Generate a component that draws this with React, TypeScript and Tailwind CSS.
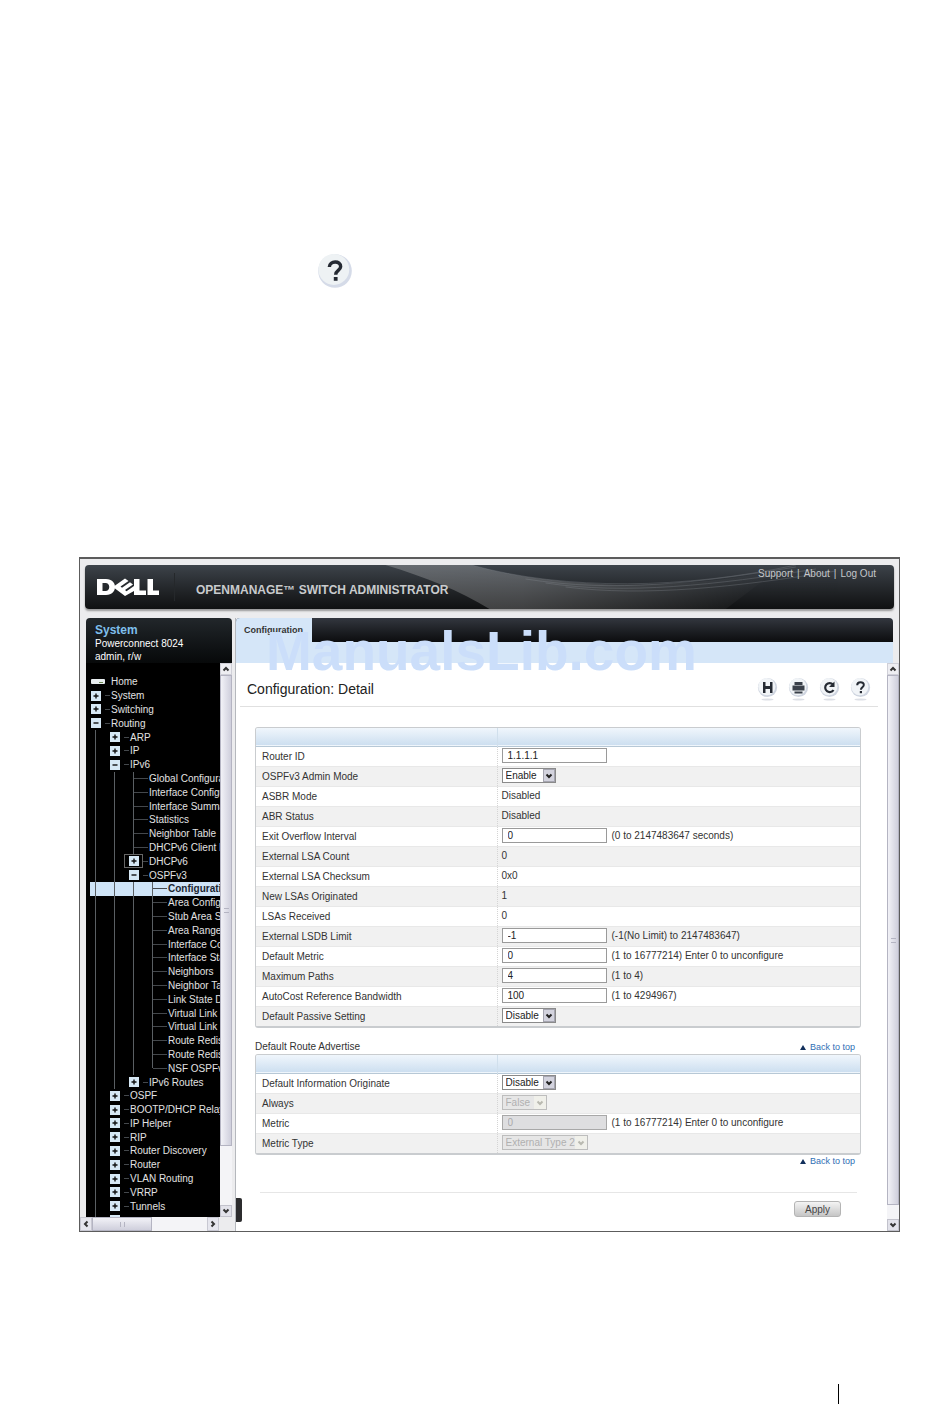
import type { ReactNode } from 'react';
import clsx from 'clsx';

type TreeNode = {
  label: string;
  depth: number;
  toggle?: 'plus' | 'minus';
  selected?: boolean;
  focused?: boolean;
  last?: boolean;
};

const TREE: TreeNode[] = [
  { label: 'System', depth: 0, toggle: 'plus' },
  { label: 'Switching', depth: 0, toggle: 'plus' },
  { label: 'Routing', depth: 0, toggle: 'minus' },
  { label: 'ARP', depth: 1, toggle: 'plus' },
  { label: 'IP', depth: 1, toggle: 'plus' },
  { label: 'IPv6', depth: 1, toggle: 'minus' },
  { label: 'Global Configuration', depth: 2 },
  { label: 'Interface Configuration', depth: 2 },
  { label: 'Interface Summary', depth: 2 },
  { label: 'Statistics', depth: 2 },
  { label: 'Neighbor Table', depth: 2 },
  { label: 'DHCPv6 Client Parameters', depth: 2 },
  { label: 'DHCPv6', depth: 2, toggle: 'plus', focused: true },
  { label: 'OSPFv3', depth: 2, toggle: 'minus' },
  { label: 'Configuration', depth: 3, selected: true },
  { label: 'Area Configuration', depth: 3 },
  { label: 'Stub Area Summary', depth: 3 },
  { label: 'Area Range Configuration', depth: 3 },
  { label: 'Interface Configuration', depth: 3 },
  { label: 'Interface Statistics', depth: 3 },
  { label: 'Neighbors', depth: 3 },
  { label: 'Neighbor Table', depth: 3 },
  { label: 'Link State Database', depth: 3 },
  { label: 'Virtual Link Configuration', depth: 3 },
  { label: 'Virtual Link Summary', depth: 3 },
  { label: 'Route Redistribution', depth: 3 },
  { label: 'Route Redistribution', depth: 3 },
  { label: 'NSF OSPFv3', depth: 3, last: true },
  { label: 'IPv6 Routes', depth: 2, toggle: 'plus' },
  { label: 'OSPF', depth: 1, toggle: 'plus' },
  { label: 'BOOTP/DHCP Relay', depth: 1, toggle: 'plus' },
  { label: 'IP Helper', depth: 1, toggle: 'plus' },
  { label: 'RIP', depth: 1, toggle: 'plus' },
  { label: 'Router Discovery', depth: 1, toggle: 'plus' },
  { label: 'Router', depth: 1, toggle: 'plus' },
  { label: 'VLAN Routing', depth: 1, toggle: 'plus' },
  { label: 'VRRP', depth: 1, toggle: 'plus' },
  { label: 'Tunnels', depth: 1, toggle: 'plus' },
  { label: '', depth: 1, toggle: 'plus' },
];

type Field = {
  label: string;
  value: string;
  kind: 'input' | 'select' | 'text';
  hint?: string;
  disabled?: boolean;
};

const DETAIL: Field[] = [
  { label: 'Router ID', value: '1.1.1.1', kind: 'input' },
  { label: 'OSPFv3 Admin Mode', value: 'Enable', kind: 'select' },
  { label: 'ASBR Mode', value: 'Disabled', kind: 'text' },
  { label: 'ABR Status', value: 'Disabled', kind: 'text' },
  { label: 'Exit Overflow Interval', value: '0', kind: 'input', hint: '(0 to 2147483647 seconds)' },
  { label: 'External LSA Count', value: '0', kind: 'text' },
  { label: 'External LSA Checksum', value: '0x0', kind: 'text' },
  { label: 'New LSAs Originated', value: '1', kind: 'text' },
  { label: 'LSAs Received', value: '0', kind: 'text' },
  { label: 'External LSDB Limit', value: '-1', kind: 'input', hint: '(-1(No Limit) to 2147483647)' },
  { label: 'Default Metric', value: '0', kind: 'input', hint: '(1 to 16777214) Enter 0 to unconfigure' },
  { label: 'Maximum Paths', value: '4', kind: 'input', hint: '(1 to 4)' },
  { label: 'AutoCost Reference Bandwidth', value: '100', kind: 'input', hint: '(1 to 4294967)' },
  { label: 'Default Passive Setting', value: 'Disable', kind: 'select' },
];

const ADVERTISE: Field[] = [
  { label: 'Default Information Originate', value: 'Disable', kind: 'select' },
  { label: 'Always', value: 'False', kind: 'select', disabled: true },
  { label: 'Metric', value: '0', kind: 'input', hint: '(1 to 16777214) Enter 0 to unconfigure', disabled: true },
  { label: 'Metric Type', value: 'External Type 2', kind: 'select', disabled: true },
];

const SELECT_WIDTH: Record<string, string> = {
  Enable: 'w-[54px]',
  Disable: 'w-[54px]',
  False: 'w-[45px]',
  'External Type 2': 'w-[86px]',
};

function Chevron({ turn = '' }: { turn?: string }) {
  return (
    <svg viewBox="0 0 8 8" className={clsx('h-2 w-2', turn)} fill="none" stroke="currentColor" strokeWidth="2">
      <path d="M1.5 2.5 4 5 6.5 2.5" />
    </svg>
  );
}

function Guide() {
  return (
    <span className="flex w-[19px] shrink-0 justify-center self-stretch">
      <span className="w-px bg-[#5a5f63]" />
    </span>
  );
}

function TreeRow({ node }: { node: TreeNode }) {
  const guides = Array.from({ length: node.depth }, (_, i) => <Guide key={i} />);
  return (
    <li
      className={clsx(
        'flex min-h-0 flex-1 items-center',
        node.selected && 'bg-linear-to-r from-black from-[4px] to-[#cfe4f7] to-[4px]',
      )}
    >
      {guides}
      {node.toggle ? (
        <span
          className={clsx(
            'flex w-[19px] shrink-0 items-center justify-center self-stretch',
            node.focused && 'outline outline-1 -outline-offset-1 outline-[#666]',
          )}
        >
          <button
            type="button"
            aria-label={`Toggle ${node.label}`}
            className="flex h-[10px] w-[10px] items-center justify-center bg-[#d6e8f5] text-[#111]"
          >
            <svg viewBox="0 0 10 10" className="h-[10px] w-[10px]" stroke="currentColor" strokeWidth="1.4">
              <path d={node.toggle === 'plus' ? 'M2.5 5h5M5 2.5v5' : 'M2.5 5h5'} />
            </svg>
          </button>
        </span>
      ) : (
        <span className="flex w-[19px] shrink-0 self-stretch pl-[9px]">
          <span className={clsx('w-px bg-[#5a5f63]', node.last ? 'h-1/2' : 'h-full')} />
          <span className="h-px flex-1 self-center bg-[#44484c]" />
        </span>
      )}
      <span className="mr-px h-px w-[5px] shrink-0 bg-[#44484c]" />
      <a
        href="#"
        className={clsx(
          'whitespace-nowrap text-[10px] leading-[13px]',
          node.selected ? 'font-bold text-[#1a2430]' : 'text-[#e2e2e2]',
        )}
      >
        {node.label}
      </a>
    </li>
  );
}

function FieldControl({ field, id }: { field: Field; id: string }) {
  if (field.kind === 'text') return <output id={id}>{field.value}</output>;
  if (field.kind === 'select') {
    return (
      <span className="relative inline-flex">
        <select
          id={id}
          disabled={field.disabled}
          defaultValue={field.value}
          className={clsx(
            'h-[15px] appearance-none border pl-[3px] leading-[13px] opacity-100',
            SELECT_WIDTH[field.value],
            field.disabled ? 'border-[#bdbdbd] bg-[#e6e6e6] text-[#b0b0b0]' : 'border-[#8a8a8a] bg-white text-[#222]',
          )}
        >
          <option>{field.value}</option>
        </select>
        <span
          className={clsx(
            'pointer-events-none absolute inset-y-px right-px flex w-3 items-center justify-center',
            field.disabled ? 'bg-[#f0f0ea] text-[#b9b9b0]' : 'border border-[#a5a5b0] bg-[#d3d3de] text-[#222]',
          )}
        >
          <Chevron />
        </span>
      </span>
    );
  }
  return (
    <span className="flex items-center gap-[5px]">
      <input
        id={id}
        defaultValue={field.value}
        disabled={field.disabled}
        className={clsx(
          'h-[15px] w-[105px] border px-[5px]',
          field.disabled ? 'border-[#a8a8a8] bg-[#dedee0] text-[#aaa]' : 'border-[#9a9a9a] bg-white text-[#222]',
        )}
      />
      {field.hint}
    </span>
  );
}

function FieldTable({ name, fields }: { name: string; fields: Field[] }) {
  return (
    <div className="overflow-hidden rounded-[3px] border border-b-2 border-[#c9cccf]">
      <table aria-label={name} className="w-full table-fixed border-collapse text-[10px] leading-[13px] text-[#333]">
        <thead>
          <tr className="h-[18px] border-b border-[#b7c8d6] bg-gradient-to-b from-[#f0f6fc] to-[#cddff0]">
            <th className="w-[241px]" />
            <th className="border-l border-[#d0dfec]" />
          </tr>
        </thead>
        <tbody>
          {fields.map((field) => {
            const id = `${name}-${field.label}`.replace(/\s+/g, '-');
            return (
              <tr key={field.label} className="h-5 border-b border-[#e8e8e8] even:bg-[#f1f1f1] last:border-b-0">
                <td className="py-0 pl-[6px]">
                  <label htmlFor={id}>{field.label}</label>
                </td>
                <td className="border-l border-dotted border-[#d4d4d4] py-0 pl-1">
                  <div className="flex h-[19px] items-center pb-px">
                    <FieldControl field={field} id={id} />
                  </div>
                </td>
              </tr>
            );
          })}
        </tbody>
      </table>
    </div>
  );
}

function BackToTop() {
  return (
    <a href="#top" className="flex items-center gap-1 text-[9px] leading-[13px] text-[#2f6fb5]">
      <svg viewBox="0 0 6 5" className="h-[5px] w-[6px]" fill="#12305c">
        <path d="M3 0 6 5H0z" />
      </svg>
      Back to top
    </a>
  );
}

function RoundButton({ label, children }: { label: string; children: ReactNode }) {
  return (
    <button type="button" aria-label={label} className="h-6 w-[21px]">
      <svg viewBox="0 0 21 24" className="h-6 w-[21px]">
        <ellipse cx="10.5" cy="22.5" rx="6" ry="1" fill="#dde0e6" />
        <circle cx="10.5" cy="10.5" r="9.6" fill="#cfd5e0" />
        <circle cx="9.8" cy="9.6" r="8.6" fill="#f1f4f7" />
        {children}
      </svg>
    </button>
  );
}

function QuestionMark() {
  return (
    <>
      <path d="M7.2 8.2C7.2 4.3 14 4.2 13.8 8c-.1 2.2-2.9 2.2-2.9 4.7" fill="none" stroke="#252a33" strokeWidth="2" />
      <rect x="9.8" y="14" width="2.2" height="2.2" fill="#252a33" />
    </>
  );
}

function VScroll({ thumb }: { thumb: string }) {
  return (
    <div className="flex w-3 shrink-0 flex-col bg-[#f4f4f7]">
      <button
        type="button"
        aria-label="Scroll up"
        className="flex h-3 items-center justify-center border border-[#d0d0d8] bg-[#eeeef2] text-[#333]"
      >
        <Chevron turn="rotate-180" />
      </button>
      <div className={clsx('flex items-center justify-center border border-[#b4b4c2] bg-gradient-to-r from-[#f2f2f7] to-[#cfcfdc]', thumb)}>
        <span className="h-[5px] w-[5px] border-y border-[#b4b4c2]" />
      </div>
      <span className="flex-1" />
      <button
        type="button"
        aria-label="Scroll down"
        className="flex h-3 items-center justify-center border border-[#c2c2cc] bg-[#e2e2ea] text-[#333]"
      >
        <Chevron />
      </button>
    </div>
  );
}

function Banner() {
  return (
    <header className="relative mx-[5px] mt-[6px] flex h-[44px] items-center overflow-hidden rounded-[4px] bg-gradient-to-b from-[#3d434a] to-[#101112] shadow-[0_2px_2px_#999]">
      <svg viewBox="0 0 808 44" preserveAspectRatio="none" className="absolute inset-0 h-full w-full">
        <defs>
          <linearGradient id="sweep" x1="0" y1="0" x2="1" y2="0">
            <stop offset="0" stopColor="#fff" stopOpacity="0.22" />
            <stop offset="0.35" stopColor="#fff" stopOpacity="0.2" />
            <stop offset="1" stopColor="#fff" stopOpacity="0" />
          </linearGradient>
        </defs>
        <path d="M300 0C340 12 375 26 404 44H640L690 6C600 24 480 26 386 0Z" fill="url(#sweep)" />
        <g fill="none" stroke="#8b9197" strokeWidth="0.6" opacity="0.5">
          <path d="M386 0C480 26 600 24 710 0" />
          <path d="M440 14C530 28 610 18 710 2" />
          <path d="M460 18C540 30 630 20 730 4" />
          <path d="M480 22C560 32 650 22 750 6" />
        </g>
      </svg>
      <svg viewBox="0 0 64 18" role="img" aria-label="Dell" className="relative ml-[11px] h-[18px] w-16">
        <path
          d="M1 1H10C22 1 22 17 10 17H1ZM6.500 5V13H9.500C14.500 13 14.500 5 9.500 5Z"
          fill="#fff"
          fillRule="evenodd"
        />
        <path d="M17 9 29 0.500 32.500 3 24.500 8.500 26 9.800 34 4.300 37 6.500 29 12 30.500 13.200 38 8V13L29 18Z" fill="#fff" />
        <path d="M38 1H43.500V12.500H50V17H38ZM51.500 1H57V12.500H63V17H51.500Z" fill="#fff" />
      </svg>
      <span className="relative ml-[14px] h-7 w-px bg-[#25282b]" />
      <h1 className="relative ml-[21px] whitespace-nowrap pt-[6px] text-[12px] leading-[14px] font-bold text-[#c9cbcd]">
        OPENMANAGE™ SWITCH ADMINISTRATOR
      </h1>
      <nav className="relative mr-[18px] ml-auto flex gap-1 self-start pt-[2px] text-[10px] leading-[13px] text-[#c4c7ca]">
        <a href="#support">Support</a>
        <span>|</span>
        <a href="#about">About</a>
        <span>|</span>
        <a href="#logout">Log Out</a>
      </nav>
    </header>
  );
}

function Sidebar() {
  return (
    <aside className="flex w-[155px] shrink-0 flex-col">
      <div className="mr-[3px] ml-[6px] h-[45px] rounded-t-[4px] bg-gradient-to-b from-[#22272b] to-[#07090a] pt-[6px] pl-[9px] text-[10px] leading-[13px] text-white">
        <h2 className="text-[12px] font-bold text-[#7fbfec]">System</h2>
        <p>Powerconnect 8024</p>
        <p>admin, r/w</p>
      </div>
      <div className="mr-[3px] ml-[6px] flex h-[554px]">
        <nav aria-label="Navigation" className="flex-1 overflow-hidden bg-black pt-3">
          <ul className="flex h-[552px] w-[300px] flex-col">
            <li className="flex min-h-0 flex-1 items-center">
              <svg viewBox="0 0 14 5" className="ml-[5px] h-[5px] w-[14px]">
                <rect width="14" height="5" rx="1" fill="#e8eef0" />
                <path d="M8 3.5h4" stroke="#6c8a52" />
              </svg>
              <a href="#home" className="ml-[6px] text-[10px] leading-[13px] text-[#e2e2e2]">
                Home
              </a>
            </li>
            {TREE.map((node, i) => (
              <TreeRow key={i} node={node} />
            ))}
          </ul>
        </nav>
        <VScroll thumb="h-[471px]" />
      </div>
      <div className="mr-[16px] flex h-[14px] bg-[#f4f4f7] text-[#333]">
        <button type="button" aria-label="Scroll left" className="flex w-3 items-center justify-center border border-[#c8c8d2] bg-[#e6e6ee]">
          <Chevron turn="rotate-90" />
        </button>
        <div className="flex w-[60px] items-center justify-center border border-[#b4b4c2] bg-gradient-to-b from-[#f2f2f7] to-[#cfcfdc]">
          <span className="h-[5px] w-[5px] border-x border-[#b4b4c2]" />
        </div>
        <span className="flex-1" />
        <button type="button" aria-label="Scroll right" className="flex w-3 items-center justify-center border border-[#c8c8d2] bg-[#e6e6ee]">
          <Chevron turn="-rotate-90" />
        </button>
      </div>
    </aside>
  );
}

function Detail() {
  return (
    <main className="relative flex-1 bg-white pb-[14px]">
      <div className="mr-[9px] ml-1 flex h-[44px] items-center justify-between border-b border-[#e0e0e0] px-[7px] pt-2">
        <h2 className="text-[14px] leading-[18px] text-[#222]">Configuration: Detail</h2>
        <div className="flex gap-[10px]">
          <RoundButton label="Save">
            <path d="M6 5h9.5v11H6z" fill="#252a33" />
            <path d="M8.500 4.500h4.500V9H8.500zM8.500 12h4.500v5H8.500z" fill="#f1f4f7" />
          </RoundButton>
          <RoundButton label="Print">
            <path d="M6.500 5h8v3h-8zM4.500 8.500h12v5h-12zM6.500 14.500h8v2h-8z" fill="#3a404a" />
          </RoundButton>
          <RoundButton label="Refresh">
            <path d="M14 7.500A4.500 4.500 0 1 0 14.500 13" fill="none" stroke="#252a33" strokeWidth="2.2" />
            <path d="M15.500 4.500v5.500h-5.500z" fill="#252a33" />
          </RoundButton>
          <RoundButton label="Help">
            <QuestionMark />
          </RoundButton>
        </div>
      </div>
      <div className="mt-5 mr-[26px] ml-[19px]">
        <FieldTable name="detail" fields={DETAIL} />
        <div className="mt-[12px] flex items-center justify-between pr-[6px]">
          <h3 className="text-[10px] leading-[14px] text-[#333]">Default Route Advertise</h3>
          <BackToTop />
        </div>
        <FieldTable name="advertise" fields={ADVERTISE} />
        <div className="flex justify-end pr-[6px]">
          <BackToTop />
        </div>
        <div className="mt-[24px] mr-1 ml-[5px] flex justify-end border-t border-[#e6e6e6] pt-2 pr-4">
          <button
            type="submit"
            className="h-4 w-[47px] rounded-[3px] border border-[#b4b4b4] bg-gradient-to-b from-[#f4f4f4] to-[#c6c6c6] text-[10px] leading-[13px] text-[#444]"
          >
            Apply
          </button>
        </div>
      </div>
      <span className="absolute bottom-[9px] left-0 h-6 w-[6px] rounded-r-[2px] bg-[#2c2c2e]" />
    </main>
  );
}

export default function App() {
  return (
    <div id="top" className="min-h-screen bg-white pt-[253px] font-['Liberation_Sans',Arial,sans-serif]">
      <button type="button" aria-label="Help" className="ml-[317px] block h-9 w-9">
        <svg viewBox="0 0 21 21" className="h-9 w-9">
          <circle cx="10.500" cy="10.500" r="9.800" fill="#d5dbe8" />
          <circle cx="9.800" cy="9.600" r="9" fill="#eef2f4" />
          <QuestionMark />
        </svg>
      </button>

      <div className="relative mt-[268px] mr-[50px] ml-[79px] border border-t-2 border-[#5c5c5c] bg-[#ececee]">
        <Banner />
        <div className="mt-[9px] flex">
          <Sidebar />
          <div className="flex min-w-0 flex-1 flex-col border-l border-[#b5b8bd]">
            <div className="mr-[6px] rounded-t-[4px] bg-[#d5e6f8]">
              <div className="flex h-[24px] rounded-t-[4px] bg-gradient-to-b from-[#33373f] to-[#0c0d0f]">
                <a
                  href="#configuration"
                  className="w-[76px] rounded-tl-[4px] bg-[#d5e6f8] pt-[6px] pl-2 text-[9px] leading-[13px] font-bold text-[#333]"
                >
                  Configuration
                </a>
              </div>
              <div className="h-[21px]" />
            </div>
            <div className="flex flex-1">
              <Detail />
              <VScroll thumb="h-[530px]" />
            </div>
          </div>
        </div>
        <span className="pointer-events-none absolute top-[60px] left-[186px] text-[55px] leading-[64px] font-bold text-[#cbdefa]">
          ManualsLib.com
        </span>
      </div>

      <div className="mt-[152px] flex justify-end pr-[111px] pb-2">
        <span className="h-5 w-px bg-black" />
      </div>
    </div>
  );
}
